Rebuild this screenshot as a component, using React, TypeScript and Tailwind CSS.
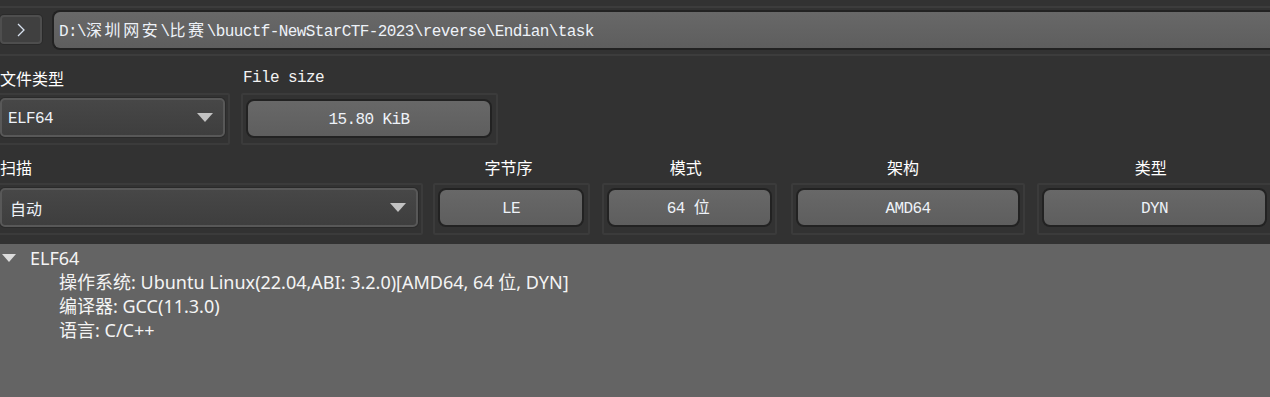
import React from "react";

const mono = { fontFamily: '"Liberation Mono", "Noto Sans CJK SC", monospace' };

function Cjk({ children }: { children: React.ReactNode }) {
  return <span className="text-[16px] tracking-[2.6px]">{children}</span>;
}

function Arrow() {
  return (
    <svg width="16" height="9" viewBox="0 0 16 9" className="shrink-0">
      <polygon points="0,0 16,0 8,9" fill="#c2c2c2" />
    </svg>
  );
}

function Combo({ width, children, pl }: { width: number; children: React.ReactNode; pl: string }) {
  return (
    <div
      className={`flex h-[39px] items-center justify-between rounded-[5px] border-2 border-[#585858] bg-gradient-to-b from-[#474747] to-[#3e3e3e] pr-[10px] shadow-[0_0_0_1px_#2a2a2a] ${pl}`}
      style={{ width }}
    >
      {children}
      <Arrow />
    </div>
  );
}

function ValueBox({ children }: { children: React.ReactNode }) {
  return (
    <div
      className="flex h-[39px] w-full items-center justify-center rounded-[8px] border-2 border-[#222] bg-gradient-to-b from-[#686868] to-[#5e5e5e] pt-[3px] text-[16px] tracking-[-0.6px] text-[#eef2f8]"
      style={mono}
    >
      <span>{children}</span>
    </div>
  );
}

function Frame({ width, children, className = "" }: { width: number; children: React.ReactNode; className?: string }) {
  return (
    <div
      className={`h-[52px] shrink-0 rounded-[2px] border-2 border-[#3b3b3b] px-[3px] pt-[3px] ${className}`}
      style={{ width }}
    >
      {children}
    </div>
  );
}

const cjkSans = { fontFamily: '"Noto Sans CJK SC", "Noto Sans", sans-serif' };

export default function App() {
  return (
    <div className="h-[397px] w-[1270px] overflow-hidden bg-[#323232] text-white">
      <div className="h-[6px]" />
      {/* path row */}
      <div className="flex h-[50px] items-start border-y-2 border-[#3c3c3c]">
        <button className="mt-[7px] flex h-[29px] w-[42px] items-center justify-center rounded-[4px] border-2 border-[#4e4e4e] bg-[#404040] shadow-[0_0_0_1px_#2a2a2a]">
          <svg width="10" height="14" viewBox="0 0 10 14">
            <polyline points="2,1 8,7 2,13" fill="none" stroke="#d8e2f0" strokeWidth="1.3" />
          </svg>
        </button>
        <div
          className="ml-[10px] mt-[2px] flex h-[40px] flex-1 items-center rounded-l-[8px] border-2 border-r-0 border-[#222] bg-gradient-to-b from-[#686868] to-[#5e5e5e] pl-[5px] pt-[4px] text-[16px] tracking-[-0.6px] text-[#eef2f8]"
          style={mono}
        >
          <span>
            D:\<Cjk>深圳网安</Cjk>\<Cjk>比赛</Cjk>\buuctf-NewStarCTF-2023\reverse\Endian\task
          </span>
        </div>
      </div>

      {/* labels row 1 */}
      <div className="flex h-[37px] items-center pt-[6px]">
        <div className="w-[243px] text-[16px] leading-none" style={cjkSans}>
          文件类型
        </div>
        <div className="text-[16px] leading-none tracking-[-0.6px] text-[#f2f2f2]" style={mono}>
          File size
        </div>
      </div>

      {/* boxes row 1 */}
      <div className="flex h-[52px]">
        <Frame width={232} className="-ml-[2px] pl-0">
          <Combo width={225} pl="pl-[6px]">
            <span className="pt-[3px] text-[16px] tracking-[-0.6px] text-[#eef2f8]" style={mono}>
              ELF64
            </span>
          </Combo>
        </Frame>
        <Frame width={257} className="ml-[11px] pt-[4px] pr-[4px]">
          <ValueBox>15.80 KiB</ValueBox>
        </Frame>
      </div>

      {/* labels row 2 */}
      <div className="flex h-[38px] items-center pt-[6px] text-[16px] leading-none" style={cjkSans}>
        <div className="w-[433px]">扫描</div>
        <div className="w-[157px] text-center">字节序</div>
        <div className="ml-[12px] w-[175px] text-center">模式</div>
        <div className="ml-[14px] w-[234px] text-center">架构</div>
        <div className="ml-[12px] w-[240px] text-center">类型</div>
      </div>

      {/* boxes row 2 */}
      <div className="flex h-[52px]">
        <Frame width={425} className="-ml-[2px] pl-0">
          <Combo width={418} pl="pl-[8px]">
            <span className="text-[16px] text-[#eef2f8]" style={cjkSans}>
              自动
            </span>
          </Combo>
        </Frame>
        <Frame width={157} className="ml-[10px] pr-[4px]">
          <ValueBox>LE</ValueBox>
        </Frame>
        <Frame width={175} className="ml-[12px] pr-[3px]">
          <ValueBox>
            64 <Cjk>位</Cjk>
          </ValueBox>
        </Frame>
        <Frame width={234} className="ml-[14px] pr-[3px]">
          <ValueBox>AMD64</ValueBox>
        </Frame>
        <Frame width={240} className="ml-[12px] pr-[8px]">
          <ValueBox>DYN</ValueBox>
        </Frame>
      </div>

      {/* tree */}
      <div
        className="mt-[9px] h-[200px] bg-[#646464] pt-[2px] text-[18px] leading-[24px] text-[#f4f4f4]"
        style={{ fontFamily: '"Noto Sans", "Noto Sans CJK SC", sans-serif' }}
      >
        <div className="flex items-center">
          <svg width="14" height="8" viewBox="0 0 14 8" className="ml-[2px]">
            <polygon points="0,0 14,0 7,8" fill="#dcdcdc" />
          </svg>
          <span className="ml-[14px]">ELF64</span>
        </div>
        <div className="pl-[59px]">
          <div>操作系统: Ubuntu Linux(22.04,ABI: 3.2.0)[AMD64, 64 位, DYN]</div>
          <div>编译器: GCC(11.3.0)</div>
          <div>语言: C/C++</div>
        </div>
      </div>
    </div>
  );
}
